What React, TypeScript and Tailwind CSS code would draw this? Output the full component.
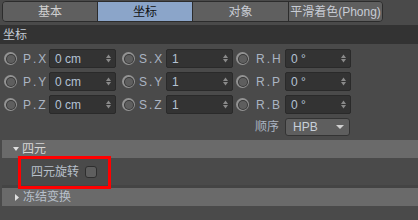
import React from "react";

const font = { fontFamily: '"Liberation Sans", "Noto Sans CJK SC", sans-serif' };

function Radio() {
  return (
    <div className="w-[13px] h-[13px] rounded-full bg-[#939393] flex items-center justify-center shrink-0">
      <div className="w-[10px] h-[10px] rounded-full bg-[#383838] flex items-center justify-center">
        <div className="w-[8px] h-[8px] rounded-full bg-[#5e5e5e]" />
      </div>
    </div>
  );
}

function Spinner() {
  return (
    <svg width="5" height="9" viewBox="0 0 5 9" className="shrink-0">
      <path d="M0 4 L2.5 0.5 L5 4 Z" fill="#8a8a8a" />
      <path d="M0 5 L2.5 8.5 L5 5 Z" fill="#8a8a8a" />
    </svg>
  );
}

function Field({ value, w }: { value: string; w: string }) {
  return (
    <div
      className={`${w} h-[19px] bg-[#333333] border border-[#2a2a2a] rounded-[2px] flex items-center justify-between pl-[5px] pr-[4px] shrink-0`}
    >
      <span className="text-[12px] leading-none text-[#b4c2d4] whitespace-pre">{value}</span>
      <Spinner />
    </div>
  );
}

function Label({ a, b, cls }: { a: string; b: string; cls: string }) {
  return (
    <span className={`${cls} flex items-center gap-[2px] text-[12px] leading-none text-[#aab4c2] shrink-0`}>
      <span>{a}</span>
      <span>.</span>
      <span>{b}</span>
    </span>
  );
}

const rows = [
  ["P", "X", "0 cm", "S", "X", "1", "R", "H", "0 °"],
  ["P", "Y", "0 cm", "S", "Y", "1", "R", "P", "0 °"],
  ["P", "Z", "0 cm", "S", "Z", "1", "R", "B", "0 °"],
];

export default function App() {
  return (
    <div className="w-[418px] h-[220px] bg-[#4a4a4a] overflow-hidden relative" style={font}>
      {/* Tabs */}
      <div className="pt-[1px] pl-[2px]">
        <div className="flex w-[381px] h-[21px] border border-[#2c2c2c] rounded-[4px] overflow-hidden">
          <div className="w-[95px] bg-[#5f5f5f] border-r border-[#2c2c2c] flex items-center justify-center text-[12px] text-[#d0d0d0]">
            基本
          </div>
          <div className="w-[95px] bg-[#8ba5c9] border-r border-[#2c2c2c] flex items-center justify-center text-[12px] text-[#111111]">
            坐标
          </div>
          <div className="w-[96px] bg-[#5f5f5f] border-r border-[#2c2c2c] flex items-center justify-center text-[12px] text-[#c8ccd4]">
            对象
          </div>
          <div className="flex-1 bg-[#5f5f5f] flex items-center justify-center text-[12px] text-[#c8ccd4]">
            平滑着色(Phong)
          </div>
        </div>
      </div>

      {/* Header */}
      <div className="mt-[3px] h-[19px] bg-[#333333] flex items-center pl-[3px] text-[12px] text-[#c4ccd6]">
        坐标
      </div>

      {/* Rows */}
      <div className="pt-[5px] flex flex-col gap-[4px]">
        {rows.map((r) => (
          <div key={r[0] + r[1]} className="flex items-center pl-[4px] h-[19px]">
            <Radio />
            <Label a={r[0]} b={r[1]} cls="ml-[6px] w-[26px]" />
            <Field value={r[2]} w="w-[67px]" />
            <div className="ml-[6px]">
              <Radio />
            </div>
            <Label a={r[3]} b={r[4]} cls="ml-[4px] w-[27px]" />
            <Field value={r[5]} w="w-[67px]" />
            <div className="ml-[3px]">
              <Radio />
            </div>
            <Label a={r[6]} b={r[7]} cls="ml-[7px] w-[29px]" />
            <Field value={r[8]} w="w-[66px]" />
          </div>
        ))}
        <div className="flex items-center h-[18px] pl-[255px]">
          <span className="w-[30px] text-[12px] leading-none text-[#aab4c2]">顺序</span>
          <div className="w-[65px] h-[18px] bg-[#5e5e5e] border border-[#333333] rounded-[3px] flex items-center justify-between pl-[7px] pr-[5px]">
            <span className="text-[12px] leading-none text-[#c8d0da]">HPB</span>
            <svg width="8" height="4" viewBox="0 0 8 4">
              <path d="M0 0 L8 0 L4 4 Z" fill="#d0d0d0" />
            </svg>
          </div>
        </div>
      </div>

      {/* Quaternion section */}
      <div className="mt-[4px] ml-[2px] h-[18px] bg-[#6a6a6a] flex items-center pl-[11px] text-[12px] text-[#d6d6d6]">
        <svg width="6" height="4" viewBox="0 0 6 4" className="mr-[3px]">
          <path d="M0 0 L6 0 L3 4 Z" fill="#e0e0e0" />
        </svg>
        四元
      </div>
      <div className="ml-[2px] h-[30px] flex items-center pl-[29px] border-b-[3px] border-[#444444]">
        <span className="text-[12px] leading-none text-[#b8c0ca]">四元旋转</span>
        <div className="ml-[6px] w-[12px] h-[12px] rounded-[3px] bg-[#5e5e5e] border border-[#2e2e2e]" />
      </div>
      <div className="ml-[2px] h-[18px] bg-[#6a6a6a] flex items-center pl-[13px] text-[12px] text-[#b8c0ca]">
        <svg width="4" height="7" viewBox="0 0 4 7" className="mr-[4px]">
          <path d="M0 0 L4 3.5 L0 7 Z" fill="#e0e0e0" />
        </svg>
        冻结变换
      </div>

      {/* Red annotation box */}
      <div className="absolute left-[18px] top-[156px] w-[93px] h-[33px] border-[3px] border-[#ff0000]" />
    </div>
  );
}
